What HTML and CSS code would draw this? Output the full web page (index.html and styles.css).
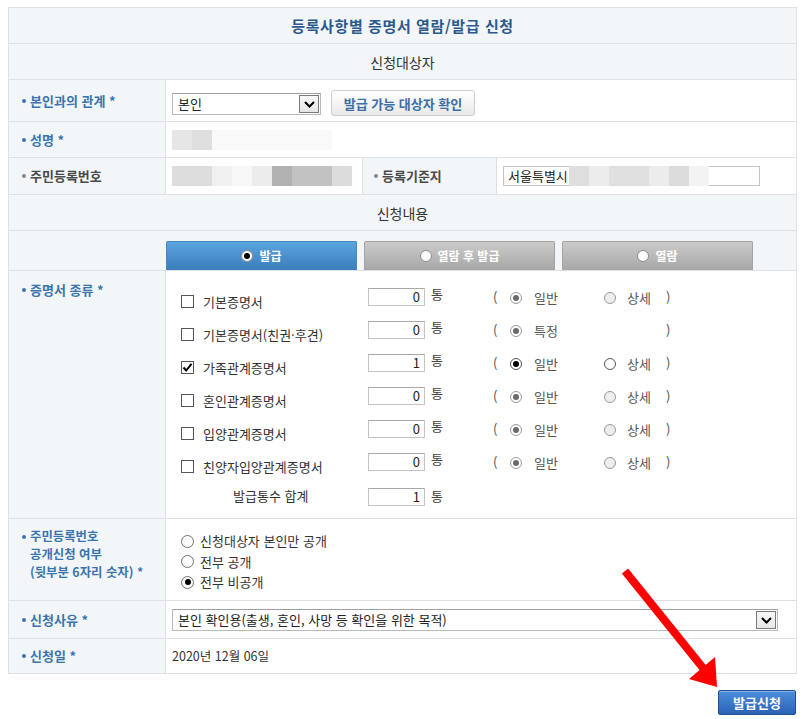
FILE: index.html
```html
<!DOCTYPE html>
<html lang="ko">
<head>
<meta charset="utf-8">
<title>등록사항별 증명서 열람/발급 신청</title>
<link rel="stylesheet" href="styles.css">
</head>
<body>
<div class="page">
  <table class="form">
    <colgroup><col class="c1"><col class="c2"><col class="c3"><col class="c4"></colgroup>
    <tr class="r-title"><th colspan="4" class="title">등록사항별 증명서 열람/발급 신청</th></tr>
    <tr class="r-sec"><th colspan="4" class="sec">신청대상자</th></tr>
    <tr class="r-rel">
      <th class="lab req"><span class="dot"></span>본인과의 관계 *</th>
      <td colspan="3" class="val">
        <div class="rel-line">
          <div class="sel sel-rel"><span class="sel-text">본인</span><span class="sel-btn"><svg width="17" height="16" viewBox="0 0 17 16"><path d="M4 6 L8.5 10.5 L13 6" fill="none" stroke="#000" stroke-width="2"/></svg></span></div>
          <button class="btn-check" type="button">발급 가능 대상자 확인</button>
        </div>
      </td>
    </tr>
    <tr class="r-name">
      <th class="lab req"><span class="dot"></span>성명 *</th>
      <td colspan="3" class="val">
        <div class="mosaic"><i class="m1"></i><i class="m2"></i><i class="m3"></i></div>
      </td>
    </tr>
    <tr class="r-id">
      <th class="lab gray"><span class="dot"></span>주민등록번호</th>
      <td class="val">
        <div class="mosaic"><i class="n1"></i><i class="n2"></i><i class="n3"></i><i class="n4"></i><i class="n5"></i><i class="n6"></i><i class="n7"></i></div>
      </td>
      <th class="lab gray lab2"><span class="dot"></span>등록기준지</th>
      <td class="val">
        <div class="addr">서울특별시<span class="mosaic inline"><i class="a1"></i><i class="a2"></i><i class="a3"></i><i class="a4"></i><i class="a5"></i><i class="a6"></i></span></div>
      </td>
    </tr>
    <tr class="r-sec"><th colspan="4" class="sec">신청내용</th></tr>
    <tr class="r-tabs">
      <td colspan="4" class="tabs-cell">
        <div class="tabs">
          <div class="tab on"><span class="trd on"></span>발급</div>
          <div class="tab off"><span class="trd"></span>열람 후 발급</div>
          <div class="tab off"><span class="trd"></span>열람</div>
        </div>
      </td>
    </tr>
    <tr class="r-cert">
      <th class="lab req top"><span class="dot"></span>증명서 종류 *</th>
      <td colspan="3" class="val top">
        <div class="cert">
          <span class="cb"></span><span class="cl">기본증명서</span><span class="num">0</span><span class="unit">통</span><span class="par">(</span><span class="rd dis on"></span><span class="rt">일반</span><span class="rd dis"></span><span class="rt">상세</span><span class="par">)</span>

          <span class="cb"></span><span class="cl">기본증명서(친권·후견)</span><span class="num">0</span><span class="unit">통</span><span class="par">(</span><span class="rd dis on"></span><span class="rt">특정</span><span></span><span></span><span class="par">)</span>

          <span class="cb checked"><svg width="11" height="11" viewBox="0 0 11 11"><path d="M1.5 5.5 L4.2 8.5 L9.5 1.8" fill="none" stroke="#000" stroke-width="2"/></svg></span><span class="cl">가족관계증명서</span><span class="num">1</span><span class="unit">통</span><span class="par">(</span><span class="rd on"></span><span class="rt">일반</span><span class="rd"></span><span class="rt">상세</span><span class="par">)</span>

          <span class="cb"></span><span class="cl">혼인관계증명서</span><span class="num">0</span><span class="unit">통</span><span class="par">(</span><span class="rd dis on"></span><span class="rt">일반</span><span class="rd dis"></span><span class="rt">상세</span><span class="par">)</span>

          <span class="cb"></span><span class="cl">입양관계증명서</span><span class="num">0</span><span class="unit">통</span><span class="par">(</span><span class="rd dis on"></span><span class="rt">일반</span><span class="rd dis"></span><span class="rt">상세</span><span class="par">)</span>

          <span class="cb"></span><span class="cl">친양자입양관계증명서</span><span class="num">0</span><span class="unit">통</span><span class="par">(</span><span class="rd dis on"></span><span class="rt">일반</span><span class="rd dis"></span><span class="rt">상세</span><span class="par">)</span>

          <span class="total">발급통수 합계</span><span class="num">1</span><span class="unit">통</span>
        </div>
      </td>
    </tr>
    <tr class="r-open">
      <th class="lab req top multi"><div class="ml"><span class="dot"></span>주민등록번호</div><div class="ml">공개신청 여부</div><div class="ml">(뒷부분 6자리 숫자) *</div></th>
      <td colspan="3" class="val top">
        <ul class="opts">
          <li><span class="rd big"></span>신청대상자 본인만 공개</li>
          <li><span class="rd big"></span>전부 공개</li>
          <li><span class="rd big on"></span>전부 비공개</li>
        </ul>
      </td>
    </tr>
    <tr class="r-reason">
      <th class="lab req"><span class="dot"></span>신청사유 *</th>
      <td colspan="3" class="val">
        <div class="sel sel-reason"><span class="sel-text">본인 확인용(출생, 혼인, 사망 등 확인을 위한 목적)</span><span class="sel-btn"><svg width="17" height="16" viewBox="0 0 17 16"><path d="M4 6 L8.5 10.5 L13 6" fill="none" stroke="#000" stroke-width="2"/></svg></span></div>
      </td>
    </tr>
    <tr class="r-date">
      <th class="lab req"><span class="dot"></span>신청일 *</th>
      <td colspan="3" class="val date">2020년 12월 06일</td>
    </tr>
  </table>
  <div class="actions"><button class="btn-submit" type="button">발급신청</button></div>
  <svg class="arrow" width="120" height="140" viewBox="610 560 120 140">
    <line x1="625" y1="571" x2="703" y2="668" stroke="#ff0000" stroke-width="8"/>
    <polygon points="689,679 715,657 717,687" fill="#ff0000"/>
  </svg>
</div>
</body>
</html>
```
FILE: styles.css
```css
* { box-sizing: border-box; }
html, body { margin: 0; padding: 0; background: #fff; }
body {
  font-family: "Noto Sans CJK KR", "Noto Sans", sans-serif;
  font-size: 13px;
  color: #333;
}
.page { position: relative; width: 804px; height: 719px; padding: 7px 0 0 8px; }

.form { border-collapse: collapse; table-layout: fixed; width: 788px; }
.form th, .form td { border: 1px solid #dde1e6; padding: 0; line-height: 16px; }
.c1 { width: 157px; }
.c2 { width: 197px; }
.c3 { width: 134px; }
.c4 { width: 300px; }

.r-title { height: 36px; }
.r-sec { height: 36px; }
.r-rel { height: 42px; }
.r-name { height: 36px; }
.r-id { height: 37px; }
.r-tabs { height: 40px; }
.r-cert { height: 248px; }
.r-open { height: 82px; }
.r-reason { height: 38px; }
.r-date { height: 35px; }

.title {
  background: #f3f6f9;
  color: #2b5a8c;
  font-size: 15px;
  letter-spacing: 0.6px;
  font-weight: bold;
  text-align: center;
}
.sec {
  background: #f3f6f9;
  color: #333;
  font-size: 14px;
  font-weight: normal;
  text-align: center;
}
.lab {
  background: #f3f6f9;
  text-align: left;
  font-weight: bold;
  font-size: 13px;
  padding-left: 13px !important;
  vertical-align: middle;
}
.lab .dot {
  display: inline-block;
  width: 4px; height: 4px;
  border-radius: 50%;
  margin-right: 4px;
  vertical-align: middle;
  position: relative;
  top: -1px;
}
.lab.req { color: #3a74ad; }
.lab.req .dot { background: #3a74ad; }
.lab.gray { color: #4a4a4a; }
.lab.gray .dot { background: #888; }
.lab2 { padding-left: 11px !important; }
.lab.top { vertical-align: top; padding-top: 11px !important; }
.lab.multi { padding-top: 8px !important; }
.ml { font-size: 12.4px; line-height: 18px; height: 18px; white-space: nowrap; }
.ml + .ml { padding-left: 8px; }

.val { padding-left: 6px !important; vertical-align: middle; }
.val.top { vertical-align: top; }

/* selects */
.sel {
  display: flex;
  align-items: center;
  justify-content: space-between;
  border: 1px solid #b9b9b9;
  border-top-color: #a0a0a0;
  background: #fff;
  height: 22px;
  padding: 1px;
}
.sel-text { padding-left: 4px; font-size: 13px; color: #222; line-height: 18px; white-space: nowrap; }
.sel-btn {
  flex: none;
  width: 20px; height: 18px;
  border: 1px solid #7a7a7a;
  background: linear-gradient(#f8f8f8, #e6e6e6);
  display: flex; align-items: center; justify-content: center;
}
.sel-rel { width: 149px; }
.sel-reason { width: 606px; }

.rel-line { display: flex; align-items: flex-end; gap: 10px; padding-top: 4px; }
.btn-check {
  width: 144px; height: 26px;
  border: 1px solid #cfcfcf;
  border-radius: 3px;
  background: linear-gradient(#ffffff, #e9e9e9);
  color: #3b6fa5;
  font-family: inherit;
  font-size: 13px;
  font-weight: bold;
  padding: 0;
  margin-bottom: -1px;
  white-space: nowrap;
}

/* mosaic placeholders */
.mosaic { display: flex; }
.mosaic i { display: block; height: 20px; width: 20px; }
.m1 { background: #e6e6e6; }
.m2 { background: #dedede; }
.m3 { background: #f9f9f9; width: 120px !important; }
.n1 { background: #dddddd; width: 40px !important; }
.n2 { background: #f0f0f0; }
.n3 { background: #f8f8f8; }
.n4 { background: #ececec; }
.n5 { background: #b1b1b1; }
.n6 { background: #c2c2c2; width: 40px !important; }
.n7 { background: #dcdcdc; }
.mosaic.inline { display: inline-flex; margin-left: 1px; }
.a1 { background: #dedede; }
.a2 { background: #ececec; }
.a3 { background: #e0e0e0; width: 40px !important; }
.a4 { background: #ececec; }
.a5 { background: #dcdcdc; }
.a6 { background: #f3f3f3; }

.addr {
  width: 257px; height: 20px;
  border: 1px solid #c4c4c4;
  display: flex; align-items: center;
  padding-left: 4px;
  font-size: 13px;
  color: #222;
  white-space: nowrap;
}

/* tabs */
.tabs-cell { background: #f3f6f9; vertical-align: bottom; }
.tabs { display: flex; gap: 7px; padding-left: 157px; align-items: flex-end; }
.tab {
  width: 191px; height: 29px;
  display: flex; align-items: center; justify-content: center; gap: 6px;
  color: #fff; font-weight: bold; font-size: 12px;
  border: 1px solid; border-bottom: none;
  border-radius: 2px 2px 0 0;
}
.tab.on { background: linear-gradient(#5ba5df, #3b7cbb); border-color: #4a86c0; }
.tab.off { background: linear-gradient(#cbcbcb, #a7a7a7); border-color: #a3a3a3; }
.trd {
  width: 12px; height: 12px; border-radius: 50%;
  background: #fff; border: 1px solid #8a8a8a;
  display: inline-flex; align-items: center; justify-content: center;
}
.trd.on::after { content: ""; width: 6px; height: 6px; border-radius: 50%; background: #000; }

/* certificate grid */
.cert {
  display: grid;
  grid-template-columns: 22px 165px 57px 68px 17px 24px 70px 23px 39px 20px;
  grid-auto-rows: 33px;
  align-items: center;
  padding: 14px 0 0 9px;
}
.cb {
  width: 13px; height: 13px;
  border: 1px solid #555; background: #fff;
  display: flex; align-items: center; justify-content: center;
}
.cl { font-size: 13px; color: #333; white-space: nowrap; }
.num {
  height: 18px;
  border: 1px solid #c4c4c4; border-top-color: #a9a9a9;
  text-align: right; padding-right: 4px;
  line-height: 16px; color: #222;
  margin-bottom: 10px;
}
.unit { padding-left: 6px; margin-bottom: 16px; color: #444; }
.par { color: #555; margin-bottom: 10px; }
.rt { color: #555; margin-bottom: 8px; }
.rd {
  width: 12px; height: 12px; border-radius: 50%;
  border: 1px solid #555; background: #fff;
  display: flex; align-items: center; justify-content: center;
  margin-bottom: 8px;
}
.rd.on::after { content: ""; width: 6px; height: 6px; border-radius: 50%; background: #000; }
.rd.dis { border-color: #9a9a9a; background: #eeeeee; }
.rd.dis.on { background: #fff; }
.rd.dis.on::after { background: #6a6a6a; }
.total { grid-column: 1 / span 2; padding-left: 52px; font-size: 13px; color: #333; }
.cert > :nth-last-child(-n+3) { align-self: start; margin-top: 5px; }

/* open options */
.opts { list-style: none; margin: 0; padding: 12px 0 0 9px; }
.opts li { display: flex; align-items: center; gap: 6px; height: 20.5px; font-size: 13px; color: #333; }
.rd.big { width: 13px; height: 13px; margin-bottom: 0; border-color: #6f6f6f; }

.date { color: #333; font-size: 12.5px; }

/* submit */
.actions { display: flex; justify-content: flex-end; width: 788px; margin-top: 16px; }
.btn-submit {
  width: 78px; height: 25px;
  border: 1px solid #1f4f95;
  border-radius: 2px;
  background: linear-gradient(#4c8edb, #2a63b6);
  box-shadow: inset 0 1px 0 rgba(255,255,255,0.35);
  color: #fff;
  font-family: inherit;
  font-size: 13px;
  font-weight: bold;
  padding: 0;
}

.arrow { position: absolute; left: 610px; top: 560px; }
```
